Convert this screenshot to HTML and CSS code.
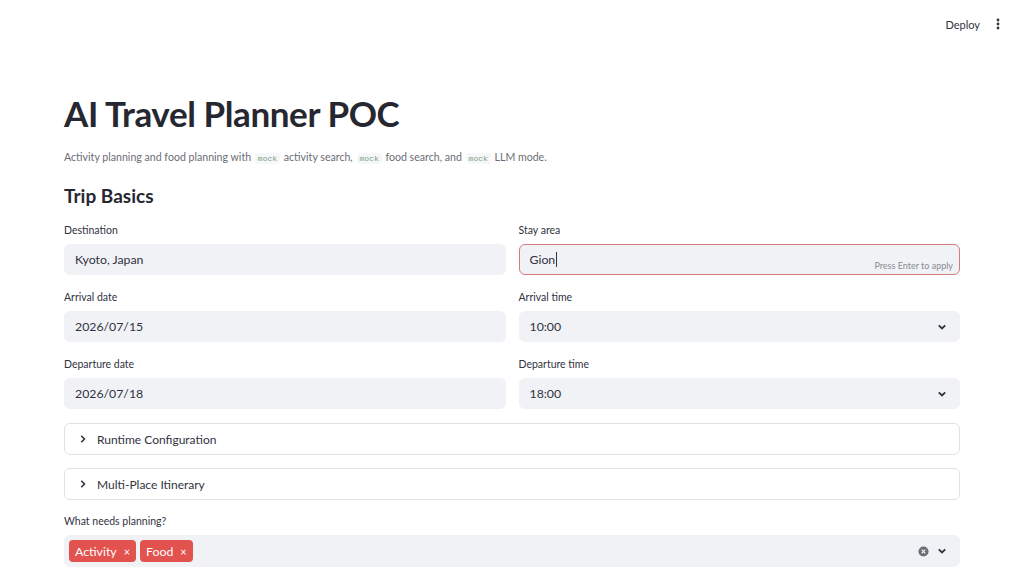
FILE: index.html
```html
<!DOCTYPE html>
<html lang="en">

<head>
    <meta charset="UTF-8">
    <meta name="viewport" content="width=device-width, initial-scale=1.0">
    <title>AI Travel Planner POC</title>
    <link rel="stylesheet" href="styles.css">
</head>

<body>
    <header class="topbar">
        <span class="deploy">Deploy</span>
        <span class="menu">
            <svg width="4" height="12" viewBox="0 0 4 12">
                <circle cx="2" cy="2" r="1.4" fill="#31333f" />
                <circle cx="2" cy="6" r="1.4" fill="#31333f" />
                <circle cx="2" cy="10" r="1.4" fill="#31333f" />
            </svg>
        </span>
    </header>

    <main class="page">
        <h1 class="title">AI Travel Planner POC</h1>
        <p class="caption">Activity planning and food planning with <code>mock</code> activity search, <code>mock</code> food search, and <code>mock</code> LLM mode.</p>
        <h3 class="section">Trip Basics</h3>

        <div class="form">
            <div class="grid">
                <div class="field">
                    <label>Destination</label>
                    <div class="input">Kyoto, Japan</div>
                </div>
                <div class="field">
                    <label>Stay area</label>
                    <div class="input focused">Gion<span class="caret"></span><span class="hint">Press Enter to apply</span></div>
                </div>
                <div class="field">
                    <label>Arrival date</label>
                    <div class="input">2026/07/15</div>
                </div>
                <div class="field">
                    <label>Arrival time</label>
                    <div class="input select">10:00
                        <svg class="chev" width="10" height="6" viewBox="0 0 10 6"><path d="M1.8 1.3 5 4.4 8.2 1.3" fill="none" stroke="#31333f" stroke-width="1.8" /></svg>
                    </div>
                </div>
                <div class="field">
                    <label>Departure date</label>
                    <div class="input">2026/07/18</div>
                </div>
                <div class="field">
                    <label>Departure time</label>
                    <div class="input select">18:00
                        <svg class="chev" width="10" height="6" viewBox="0 0 10 6"><path d="M1.8 1.3 5 4.4 8.2 1.3" fill="none" stroke="#31333f" stroke-width="1.8" /></svg>
                    </div>
                </div>
            </div>

            <div class="expanders">
                <div class="expander">
                    <svg width="6" height="10" viewBox="0 0 6 10"><path d="M1.3 1.8 4.4 5 1.3 8.2" fill="none" stroke="#31333f" stroke-width="1.6" /></svg>
                    <span>Runtime Configuration</span>
                </div>
                <div class="expander">
                    <svg width="6" height="10" viewBox="0 0 6 10"><path d="M1.3 1.8 4.4 5 1.3 8.2" fill="none" stroke="#31333f" stroke-width="1.6" /></svg>
                    <span>Multi-Place Itinerary</span>
                </div>
            </div>

            <div class="field">
                <label>What needs planning?</label>
                <div class="input multi">
                    <span class="tag">Activity <span class="x">&times;</span></span>
                    <span class="tag">Food <span class="x">&times;</span></span>
                    <span class="spacer"></span>
                    <svg class="clear" width="11" height="11" viewBox="0 0 12 12">
                        <circle cx="6" cy="6" r="5.5" fill="#6b6d76" />
                        <path d="M4 4 8 8M8 4 4 8" stroke="#f0f2f6" stroke-width="1.4" />
                    </svg>
                    <svg class="chev" width="10" height="6" viewBox="0 0 10 6"><path d="M1.8 1.3 5 4.4 8.2 1.3" fill="none" stroke="#31333f" stroke-width="1.8" /></svg>
                </div>
            </div>
        </div>
    </main>
</body>

</html>
```

FILE: styles.css
```css
body {
    margin: 0;
    background: #ffffff;
    color: #31333f;
    font-family: "Lato", "Liberation Sans", sans-serif;
}

.topbar {
    height: 48px;
    display: flex;
    justify-content: flex-end;
    align-items: center;
    padding-right: 24px;
    gap: 16px;
}

.deploy {
    font-size: 11px;
    color: #31333f;
}

.menu {
    display: flex;
    align-items: center;
}

.page {
    width: 896px;
    margin: 0 0 0 64px;
    padding-top: 44px;
}

.title {
    margin: 0;
    font-size: 35px;
    line-height: 42px;
    font-weight: 700;
    letter-spacing: -0.4px;
    color: #262730;
}

.caption {
    margin: 13px 0 0;
    font-size: 10.6px;
    line-height: 20px;
    color: #6b6d76;
}

.caption code {
    font-family: "Liberation Mono", monospace;
    font-size: 8px;
    color: #7f9f85;
    background: #f6f7f9;
    padding: 1px 3px;
    margin: 0 1px;
    border-radius: 3px;
}

.section {
    margin: 15px 0 0;
    font-size: 19px;
    line-height: 24px;
    font-weight: 700;
    color: #262730;
}

.form {
    margin-top: 15px;
    display: flex;
    flex-direction: column;
    gap: 14px;
}

.grid {
    display: grid;
    grid-template-columns: 1fr 1fr;
    column-gap: 13px;
    row-gap: 15px;
}

.expanders {
    display: flex;
    flex-direction: column;
    gap: 13px;
}

.field {
    display: flex;
    flex-direction: column;
    gap: 7px;
}

.field label {
    font-size: 10.5px;
    line-height: 14px;
    color: #31333f;
}

.input {
    position: relative;
    height: 31px;
    box-sizing: border-box;
    background: #f0f2f6;
    border: 1px solid #f0f2f6;
    border-radius: 6px;
    padding: 0 10px;
    display: flex;
    align-items: center;
    font-size: 12.3px;
    color: #31333f;
}

.input.focused {
    border-color: #d27c7c;
}

.caret {
    display: inline-block;
    width: 1px;
    height: 15px;
    background: #31333f;
    margin-left: 1px;
}

.hint {
    position: absolute;
    right: 6px;
    bottom: 3px;
    font-size: 9px;
    color: #8a8c94;
}

.select {
    justify-content: space-between;
    padding-right: 12px;
}

.expander {
    height: 32px;
    box-sizing: border-box;
    border: 1px solid #dfe1e6;
    border-radius: 6px;
    display: flex;
    align-items: center;
    gap: 11px;
    padding-left: 15px;
    font-size: 12px;
    color: #31333f;
}

.multi {
    height: 32px;
    padding: 0 12px 0 4px;
    gap: 4px;
}

.tag {
    display: inline-flex;
    align-items: center;
    gap: 7px;
    height: 22px;
    padding: 0 6px;
    border-radius: 4px;
    background: #e2524e;
    color: #ffffff;
    font-size: 12.3px;
}

.tag .x {
    font-size: 11px;
}

.spacer {
    flex: 1;
}

.clear {
    margin-right: 4px;
}
```
